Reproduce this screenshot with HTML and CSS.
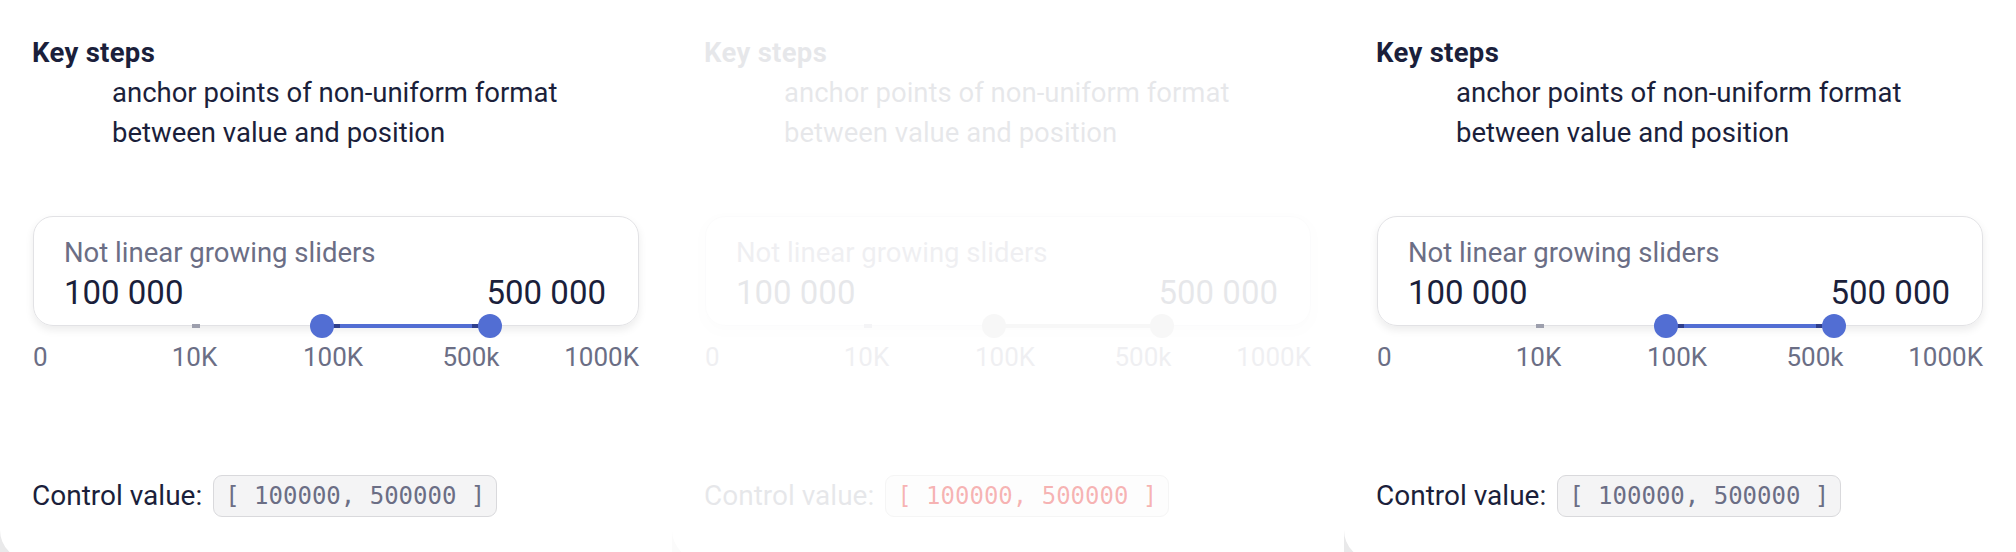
FILE: index.html
```html
<!DOCTYPE html>
<html lang="en">

<head>
    <meta charset="UTF-8" />
    <meta name="viewport" content="width=device-width, initial-scale=1.0" />
    <title>Input range - key steps</title>
    <link rel="stylesheet" href="styles.css">
</head>

<body>
    <div class="panels">

        <section class="panel">
            <div class="card">
                <h3 class="title">Key steps</h3>
                <p class="note">anchor points of non-uniform format<br>between value and position</p>
                <div class="range">
                    <div class="field">
                        <div class="field-label">Not linear growing sliders</div>
                        <div class="field-values">
                            <span>100 000</span>
                            <span>500 000</span>
                        </div>
                        <div class="slider">
                            <span class="tick"></span>
                            <span class="fill"></span>
                            <span class="mark mark-a"></span>
                            <span class="mark mark-b"></span>
                            <span class="thumb thumb-a"></span>
                            <span class="thumb thumb-b"></span>
                        </div>
                    </div>
                    <div class="ticks">
                        <span>0</span>
                        <span>10K</span>
                        <span>100K</span>
                        <span>500k</span>
                        <span>1000K</span>
                    </div>
                </div>
                <div class="control">
                    <span class="control-label">Control value:</span>
                    <code class="control-code">[ 100000, 500000 ]</code>
                </div>
            </div>
        </section>

        <section class="panel disabled">
            <div class="card">
                <h3 class="title">Key steps</h3>
                <p class="note">anchor points of non-uniform format<br>between value and position</p>
                <div class="range">
                    <div class="field">
                        <div class="field-label">Not linear growing sliders</div>
                        <div class="field-values">
                            <span>100 000</span>
                            <span>500 000</span>
                        </div>
                        <div class="slider">
                            <span class="tick"></span>
                            <span class="fill"></span>
                            <span class="thumb thumb-a"></span>
                            <span class="thumb thumb-b"></span>
                        </div>
                    </div>
                    <div class="ticks">
                        <span>0</span>
                        <span>10K</span>
                        <span>100K</span>
                        <span>500k</span>
                        <span>1000K</span>
                    </div>
                </div>
                <div class="control">
                    <span class="control-label">Control value:</span>
                    <code class="control-code">[ 100000, 500000 ]</code>
                </div>
            </div>
        </section>

        <section class="panel">
            <div class="card">
                <h3 class="title">Key steps</h3>
                <p class="note">anchor points of non-uniform format<br>between value and position</p>
                <div class="range">
                    <div class="field">
                        <div class="field-label">Not linear growing sliders</div>
                        <div class="field-values">
                            <span>100 000</span>
                            <span>500 000</span>
                        </div>
                        <div class="slider">
                            <span class="tick"></span>
                            <span class="fill"></span>
                            <span class="mark mark-a"></span>
                            <span class="mark mark-b"></span>
                            <span class="thumb thumb-a"></span>
                            <span class="thumb thumb-b"></span>
                        </div>
                    </div>
                    <div class="ticks">
                        <span>0</span>
                        <span>10K</span>
                        <span>100K</span>
                        <span>500k</span>
                        <span>1000K</span>
                    </div>
                </div>
                <div class="control">
                    <span class="control-label">Control value:</span>
                    <code class="control-code">[ 100000, 500000 ]</code>
                </div>
            </div>
        </section>

    </div>
</body>

</html>
```

FILE: styles.css
```css
body {
    margin: 0;
    font-family: Roboto, 'Liberation Sans', sans-serif;
    background-color: #fff;
    color: #1b1f3b;
}

.panels {
    display: flex;
    height: 552px;
    overflow: hidden;
}

.panel {
    width: 672px;
    height: 552px;
    background-color: #e9e9ea;
    overflow: hidden;
}

.card {
    height: 560px;
    background-color: #fff;
    border-bottom-left-radius: 30px;
    padding: 37px 0 0 32px;
    box-sizing: border-box;
}

.title {
    margin: 0;
    font-size: 27.5px;
    line-height: 32px;
    font-weight: 700;
    letter-spacing: 0.3px;
}

.note {
    margin: 4px 0 0 80px;
    font-size: 27.5px;
    line-height: 40px;
}

.range {
    margin: 63px 0 0 1px;
    width: 606px;
}

.field {
    position: relative;
    height: 110px;
    box-sizing: border-box;
    padding: 22px 32px 0 30px;
    border: 1px solid #e2e2e5;
    border-radius: 20px;
    box-shadow: 0 4px 8px rgba(0, 0, 0, 0.08);
}

.field-label {
    font-size: 27.5px;
    line-height: 28px;
    color: #6b6e85;
}

.field-values {
    display: flex;
    justify-content: space-between;
    margin-top: 6px;
    font-size: 33px;
    line-height: 40px;
}

.slider {
    position: absolute;
    left: 0;
    right: 0;
    bottom: -3px;
    height: 4px;
}

.slider span {
    position: absolute;
    top: 0;
    height: 4px;
}

.tick {
    left: 158px;
    width: 8px;
    background-color: #9d9fad;
}

.fill {
    left: 288px;
    width: 168px;
    background-color: #526ed3;
}

.mark {
    width: 6px;
    background-color: #2f3f8d;
}

.mark-a {
    left: 300px;
}

.mark-b {
    left: 438px;
}

.slider .thumb {
    top: -10px;
    width: 24px;
    height: 24px;
    border-radius: 50%;
    background-color: #526ed3;
}

.thumb-a {
    left: 276px;
}

.thumb-b {
    left: 444px;
}

.ticks {
    display: grid;
    grid-template-columns: 82px 159px 118px 158px 89px;
    margin-top: 17px;
    font-size: 26px;
    line-height: 28px;
    color: #6b6e85;
    text-align: center;
}

.ticks span:first-child {
    text-align: left;
}

.ticks span:last-child {
    text-align: right;
}

.control {
    display: flex;
    align-items: center;
    gap: 11px;
    margin-top: 104px;
}

.control-label {
    font-size: 28px;
    line-height: 28px;
}

.control-code {
    height: 42px;
    box-sizing: border-box;
    padding: 0 11px;
    border: 1px solid #d9d9dc;
    border-radius: 9px;
    background-color: #f4f4f5;
    font-family: 'DejaVu Sans Mono', 'Liberation Mono', monospace;
    font-size: 24px;
    line-height: 40px;
    color: #6b6e85;
    white-space: pre;
}

/* disabled copy in the middle */
.disabled {
    background-color: #fbfbfb;
}

.disabled .title,
.disabled .note,
.disabled .range,
.disabled .control-label {
    opacity: 0.1;
}

.disabled .fill,
.disabled .thumb {
    background-color: #b5b5b5;
}

.disabled .control-code {
    background-color: #fdfdfd;
    border-color: #f5f5f5;
    color: rgba(235, 40, 40, 0.35);
}
```
